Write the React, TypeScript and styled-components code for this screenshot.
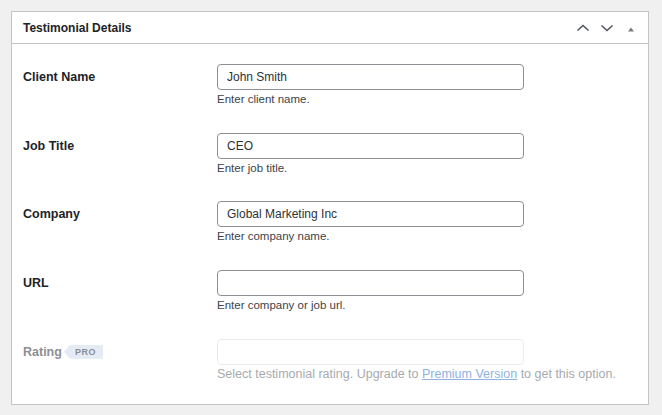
import React from 'react';
import styled, { createGlobalStyle } from 'styled-components';

const Global = createGlobalStyle`
  html, body { margin: 0; padding: 0; background: #f0f0f1; }
  body { font-family: "Liberation Sans", Arial, sans-serif; }
  * { box-sizing: border-box; }
`;

const Page = styled.div`
  padding: 11px 13px 11px 11px;
`;

const Panel = styled.section`
  background: #fff;
  border: 1px solid #c3c4c7;
`;

const Header = styled.header`
  display: flex;
  align-items: center;
  height: 32px;
  border-bottom: 1px solid #c3c4c7;
  padding: 0 5px 0 11px;
`;

const Title = styled.h2`
  margin: 0;
  flex: 1;
  font-size: 12px;
  font-weight: 700;
  color: #1d2327;
`;

const Handles = styled.div`
  display: flex;
  height: 100%;
`;

const HandleButton = styled.button`
  width: 24px;
  height: 100%;
  display: flex;
  align-items: center;
  justify-content: center;
  background: none;
  border: 0;
  padding: 0;
  color: #50575e;
`;

const Body = styled.div`
  padding: 7.15px 11px 9px;
`;

const Row = styled.div`
  display: grid;
  grid-template-columns: 194px 1fr;
  padding: 12.85px 0;
`;

const Label = styled.label<{ $disabled?: boolean }>`
  display: flex;
  align-items: center;
  height: 26px;
  font-size: 12.5px;
  font-weight: 700;
  color: ${p => (p.$disabled ? '#8c8f94' : '#1d2327')};
`;

const ProBadge = styled.span`
  display: inline-flex;
  align-items: center;
  height: 14px;
  margin-left: 2px;
  padding: 0 7px 0 11px;
  background: #e5ebf5;
  clip-path: polygon(6px 0, 100% 0, 100% 100%, 6px 100%, 0 50%);
  font-size: 9px;
  font-weight: 700;
  letter-spacing: 0.5px;
  color: #8c8f94;
`;

const Field = styled.div`
  display: flex;
  flex-direction: column;
`;

const Input = styled.input<{ $disabled?: boolean }>`
  width: 307px;
  height: 26px;
  border: 1px solid ${p => (p.$disabled ? '#ebebed' : '#8c8f94')};
  border-radius: 4px;
  padding: 0 9px;
  font-family: "Liberation Sans", Arial, sans-serif;
  font-size: 12px;
  color: #2c3338;
  background: #fff;
  outline: none;
`;

const Help = styled.p<{ $disabled?: boolean }>`
  margin: 2px 0 0;
  font-size: ${p => (p.$disabled ? '12.5px' : '11.5px')};
  line-height: 15px;
  color: ${p => (p.$disabled ? '#a7aaad' : '#3c434a')};
`;

const Link = styled.a`
  color: #8fb2df;
  text-decoration: underline;
`;

const ChevronUp = () => (
  <svg width="14" height="8" viewBox="0 0 14 8" fill="none">
    <path d="M1.5 6.5 L7 1.5 L12.5 6.5" stroke="currentColor" strokeWidth="1.6" />
  </svg>
);

const ChevronDown = () => (
  <svg width="14" height="8" viewBox="0 0 14 8" fill="none">
    <path d="M1.5 1.5 L7 6.5 L12.5 1.5" stroke="currentColor" strokeWidth="1.6" />
  </svg>
);

const Triangle = () => (
  <svg width="6" height="5" viewBox="0 0 6 5" style={{ marginTop: 3 }}>
    <path d="M0 4.5 L3 0.5 L6 4.5 Z" fill="#787c82" />
  </svg>
);

const fields = [
  { label: 'Client Name', value: 'John Smith', help: 'Enter client name.' },
  { label: 'Job Title', value: 'CEO', help: 'Enter job title.' },
  { label: 'Company', value: 'Global Marketing Inc', help: 'Enter company name.' },
  { label: 'URL', value: '', help: 'Enter company or job url.' },
];

export default function App() {
  return (
    <>
      <Global />
      <Page>
        <Panel>
          <Header>
            <Title>Testimonial Details</Title>
            <Handles>
              <HandleButton aria-label="Move up"><ChevronUp /></HandleButton>
              <HandleButton aria-label="Move down"><ChevronDown /></HandleButton>
              <HandleButton aria-label="Toggle panel"><Triangle /></HandleButton>
            </Handles>
          </Header>
          <Body>
            {fields.map(f => (
              <Row key={f.label}>
                <Label>{f.label}</Label>
                <Field>
                  <Input defaultValue={f.value} />
                  <Help>{f.help}</Help>
                </Field>
              </Row>
            ))}
            <Row>
              <Label $disabled>
                Rating<ProBadge>PRO</ProBadge>
              </Label>
              <Field>
                <Input $disabled disabled />
                <Help $disabled>
                  Select testimonial rating. Upgrade to <Link href="#">Premium Version</Link> to get this option.
                </Help>
              </Field>
            </Row>
          </Body>
        </Panel>
      </Page>
    </>
  );
}
